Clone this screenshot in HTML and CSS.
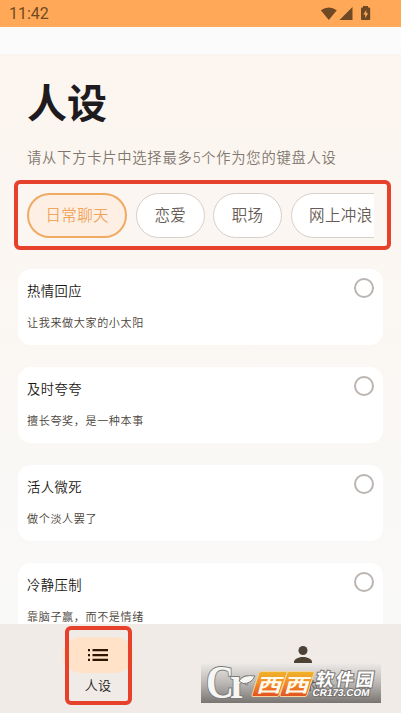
FILE: index.html
```html
<!DOCTYPE html>
<html lang="zh-CN">
<head>
<meta charset="utf-8">
<title>人设</title>
<link rel="stylesheet" href="styles.css">
</head>
<body>
<div class="phone">
  <header class="status">
    <span class="clock">11:42</span>
    <svg class="status-icons" width="52" height="18" viewBox="0 0 52 18">
      <path d="M.8 4.3Q8.800-1.300 16.800 4.300L8.800 14z"/>
      <path d="M32.500 1v13H19.500z"/>
      <path fill-rule="evenodd" d="M43 0h5v1.500h1.400q.8 0 .8.800v10.900q0 .8-.8.800h-7.600q-.8 0-.8-.8V2.300q0-.8.800-.8H43zM46.300 4l-3 4.500h1.900V12l3-4.800h-1.900z"/>
    </svg>
  </header>
  <div class="toolbar"></div>
  <main class="content">
    <h1>人设</h1>
    <p class="hint">请从下方卡片中选择最多5个作为您的键盘人设</p>
    <div class="tabs">
      <span class="chip active">日常聊天</span>
      <span class="chip">恋爱</span>
      <span class="chip">职场</span>
      <span class="chip">网上冲浪</span>
    </div>
    <div class="mark mark-tabs"></div>
    <section class="cards">
      <article class="card"><div><h2>热情回应</h2><p>让我来做大家的小太阳</p></div><i class="radio"></i></article>
      <article class="card"><div><h2>及时夸夸</h2><p>擅长夸奖，是一种本事</p></div><i class="radio"></i></article>
      <article class="card"><div><h2>活人微死</h2><p>做个淡人罢了</p></div><i class="radio"></i></article>
      <article class="card"><div><h2>冷静压制</h2><p>靠脑子赢，而不是情绪</p></div><i class="radio"></i></article>
    </section>
  </main>
  <nav class="nav">
    <a class="nav-item">
      <span class="pill"><svg width="20" height="12" viewBox="0 0 20 12"><path d="M0 0h2v2.300H0zM4.500 0H20v2.300H4.500zM0 4.900h2v2.300H0zM4.500 4.900H20v2.300H4.500zM0 9.700h2V12H0zM4.500 9.700H20V12H4.500z"/></svg></span>
      <span>人设</span>
      <div class="mark mark-nav"></div>
    </a>
    <a class="nav-item">
      <span class="person"><svg width="18" height="18" viewBox="0 0 18 18"><circle cx="9" cy="4.500" r="4.500"/><path d="M0 18v-2.200C0 12.700 5.500 11 9 11s9 1.700 9 4.800V18z"/></svg></span>
    </a>
  </nav>
  <svg class="watermark" width="180" height="40" viewBox="0 0 180 40">
    <defs>
      <linearGradient id="back" x2="0" y2="1"><stop stop-color="#edeae7"/><stop offset=".5" stop-color="#bab7b4"/><stop offset="1" stop-color="#787572"/></linearGradient>
      <linearGradient id="tile" x2="0" y2="1"><stop stop-color="#efb42b"/><stop offset=".5" stop-color="#f38a25"/><stop offset="1" stop-color="#e2501f"/></linearGradient>
    </defs>
    <rect width="180" height="40" fill="url(#back)"/>
    <text x="91" y="28" class="nav-label">我的</text>
    <g class="leaf-logo">
      <text x="5" y="35" class="big-c" textLength="28" lengthAdjust="spacingAndGlyphs">C</text>
      <text x="29" y="35" class="small-r" textLength="18" lengthAdjust="spacingAndGlyphs">r</text>
      <path d="M38 18Q42 11 54 13Q50 21 42 20.500z"/>
    </g>
    <g class="tiles">
      <path d="M60 8.500h25q1.500 0 1 1.500l-8 22q-.5 1.500-2 1.500H52q-1.500 0-1-1.500l7-22q.5-1.500 2-1.500zM88 8.500h24q1.500 0 1 1.500l-7 22q-.5 1.500-2 1.500H80q-1.500 0-1-1.500l7-22q.5-1.500 2-1.500z"/>
      <text transform="translate(55 28.500) skewX(-16)" textLength="25" lengthAdjust="spacingAndGlyphs">西</text>
      <text transform="translate(82.500 28.500) skewX(-16)" textLength="25" lengthAdjust="spacingAndGlyphs">西</text>
    </g>
    <g class="site">
      <text transform="translate(114 22.500) skewX(-9)" class="site-name" textLength="58">软件园</text>
      <text transform="translate(111 33) skewX(-10)" class="site-url" textLength="57" lengthAdjust="spacingAndGlyphs">CR173.COM</text>
    </g>
  </svg>
</div>
</body>
</html>
```
FILE: styles.css
```css
* { box-sizing: border-box; }
body {
  margin: 0;
  font-family: Roboto, "Noto Sans CJK SC", sans-serif;
}
h1, h2, p { margin: 0; font-weight: 350; }
.phone {
  position: relative;
  width: 401px;
  height: 713px;
  overflow: hidden;
  display: flex;
  flex-direction: column;
}
.status {
  flex: 0 0 27px;
  display: flex;
  justify-content: space-between;
  padding: 0 29px 0 9px;
  background: #ffa958;
  color: #704923;
}
.clock { font-size: 16px; line-height: 27px; }
.status-icons { margin-top: 6px; fill: #6f4824; }
.toolbar { flex: 0 0 27px; background: #fbfbfb; }
.content {
  position: relative;
  flex: 0 0 570px;
  overflow: hidden;
  padding: 22px 18px 0;
  background: linear-gradient(#fcf5ef, #f9f9f8);
}
h1 {
  margin-left: 9px;
  height: 58px;
  line-height: 58px;
  font-size: 40px;
  font-weight: 700;
  color: #1d1b1e;
}
.hint {
  margin: 13px 0 0 9px;
  height: 22px;
  line-height: 22px;
  font-size: 14.300px;
  letter-spacing: .75px;
  color: #80766f;
  white-space: nowrap;
}
.tabs {
  display: flex;
  gap: 8.500px;
  margin: 24px 9px 0;
  height: 45px;
  overflow: hidden;
}
.chip {
  flex: none;
  border: 1px solid #d6d0cb;
  border-radius: 23px;
  padding: 0 17.500px;
  line-height: 44px;
  font-size: 15.500px;
  font-weight: 350;
  letter-spacing: .4px;
  color: #665c55;
  background: #fff;
}
.chip:last-child { padding-right: 30px; }
.active {
  border: 2px solid #f0aa62;
  padding: 0 16.400px;
  line-height: 42px;
  color: #f0a55c;
  background: #feefe4;
}
.mark {
  position: absolute;
  border: 4px solid #e5412b;
  border-radius: 6px;
}
.mark-tabs { left: 14px; top: 126px; width: 377px; height: 70px; }
.mark-nav { left: 65px; top: 2px; width: 67px; height: 79px; }
.cards { display: grid; gap: 22px; margin-top: 31px; }
.card {
  display: flex;
  justify-content: space-between;
  height: 76px;
  padding: 9px 9px 0;
  border-radius: 13px;
  background: #fff;
}
h2 { margin-top: 1px; line-height: 26px; font-size: 13.300px; letter-spacing: .45px; color: #1a1715; }
.card p { margin-top: 9px; line-height: 20px; font-size: 11.100px; letter-spacing: .6px; color: #4b4339; }
.radio { width: 20px; height: 20px; border: 2px solid #bbb5b1; border-radius: 50%; }
.nav {
  position: relative;
  flex: 0 0 89px;
  display: grid;
  grid-template-columns: 196px 214px;
  background: #f0ebe7;
}
.nav-item {
  display: flex;
  flex-direction: column;
  align-items: center;
  padding-top: 13px;
  font-size: 13px;
  font-weight: 350;
  line-height: 26px;
  letter-spacing: .3px;
  color: #1a1715;
}
.pill {
  display: flex;
  align-items: center;
  justify-content: center;
  width: 70px;
  height: 36px;
  border-radius: 18px;
  background: #ffe2c7;
  fill: #2c1600;
}
.person { padding-top: 9px; line-height: 0; fill: #4d4235; }
.watermark { position: absolute; left: 201px; top: 663px; }
.nav-label { font-size: 13px; fill: #5c544d; }
.leaf-logo { fill: #f6f6f5; stroke: #7b7b79; stroke-width: 1px; }
.leaf-logo text { font-family: "Liberation Serif", serif; font-weight: 700; paint-order: stroke; stroke-width: 2px; }
.big-c { font-size: 46px; }
.small-r { font-size: 46px; }
.tiles path { fill: url(#tile); stroke: #f7d39e; stroke-width: 1px; }
.tiles text { font-size: 19px; font-weight: 700; fill: #fff9ec; }
.site { fill: #fff; stroke: #777472; stroke-width: 2px; }
.site text { paint-order: stroke; }
.site-name { font-size: 18px; font-weight: 700; }
.site-url { font-family: "Liberation Sans", sans-serif; font-size: 10px; font-weight: 700; }
```
